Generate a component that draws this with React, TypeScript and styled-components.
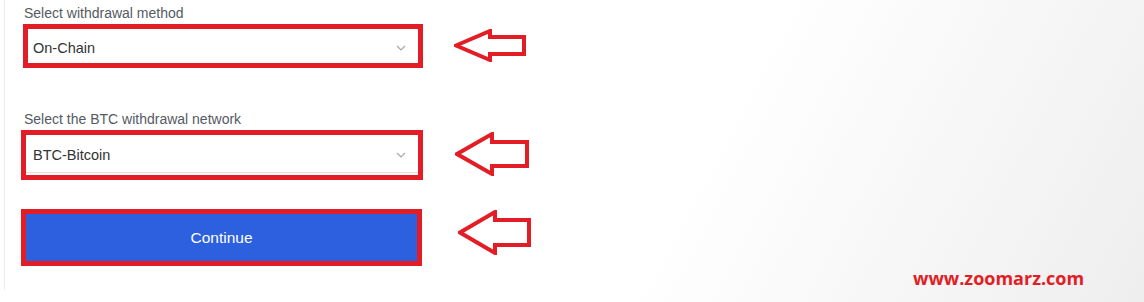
import styled, { createGlobalStyle } from "styled-components";

const GlobalStyle = createGlobalStyle`
  html, body {
    margin: 0;
    padding: 0;
  }
  body {
    font-family: "Liberation Sans", Arial, sans-serif;
  }
`;

const RED = "#e31d25";

const SPage = styled.div`
  position: relative;
  width: 1144px;
  height: 302px;
  overflow: hidden;
  background: linear-gradient(118deg, #ffffff 60%, #eeeeee 100%);
`;

const SPanel = styled.div`
  margin-left: 4px;
  width: 560px;
  height: 290px;
  box-sizing: border-box;
  border-left: 1px solid #ececec;
  padding: 5px 0 0 16px;
  display: flex;
  flex-direction: column;
`;

const SSection = styled.div<{ $gap: number }>`
  margin-top: ${({ $gap }) => $gap}px;
`;

const SLabel = styled.div`
  padding-left: 3px;
  font-size: 14px;
  line-height: 16px;
  color: #555a63;
  margin-bottom: 3px;
`;

const SRow = styled.div`
  display: flex;
  align-items: flex-start;
`;

const SFrame = styled.div<{ $offset: number; $width: number; $height: number }>`
  margin-left: ${({ $offset }) => $offset}px;
  width: ${({ $width }) => $width}px;
  height: ${({ $height }) => $height}px;
  box-sizing: border-box;
  border: 5px solid ${RED};
  display: flex;
  flex-direction: column;
`;

const SSelect = styled.div<{ $line: boolean; $pad: number }>`
  flex: 1;
  display: flex;
  align-items: center;
  justify-content: space-between;
  padding: 3px 12px 0 ${({ $pad }) => $pad}px;
  background: #fff;
  font-size: 14.5px;
  color: #333;
  border-bottom: ${({ $line }) => ($line ? "1px solid #eddcdc" : "none")};
  margin-bottom: ${({ $line }) => ($line ? 2 : 0)}px;
`;

const SButton = styled.button`
  flex: 1;
  border: none;
  margin: 0;
  background: #2d60df;
  color: #fff;
  font-family: "Liberation Sans", Arial, sans-serif;
  font-size: 15.5px;
  padding: 0;
  cursor: pointer;
`;

const SArrowBox = styled.div<{ $left: number; $top: number }>`
  margin-left: ${({ $left }) => $left}px;
  margin-top: ${({ $top }) => $top}px;
  line-height: 0;
`;

const SWatermark = styled.div`
  position: absolute;
  left: 913px;
  top: 266px;
  font-family: "Open Sans", "DejaVu Sans", sans-serif;
  font-weight: 700;
  font-size: 18px;
  color: ${RED};
`;

const Chevron = () => (
  <svg width="10" height="6" viewBox="0 0 10 6" fill="none">
    <path d="M1 1l4 4 4-4" stroke="#a5a8ad" strokeWidth="1.2" />
  </svg>
);

const Arrow = ({ w, h }: { w: number; h: number }) => {
  const s = 2;
  const hx = Math.round(w * 0.5);
  const t = Math.round(h * 0.23);
  const b = Math.round(h * 0.77);
  const pts = [
    [s, h / 2],
    [hx, s],
    [hx, t],
    [w - s, t],
    [w - s, b],
    [hx, b],
    [hx, h - s],
  ]
    .map((p) => p.join(","))
    .join(" ");
  return (
    <svg width={w} height={h} viewBox={`0 0 ${w} ${h}`}>
      <polygon points={pts} fill="none" stroke={RED} strokeWidth="4" strokeLinejoin="miter" />
    </svg>
  );
};

const App = () => {
  return (
    <>
      <GlobalStyle />
      <SPage>
        <SPanel>
          <SSection $gap={0}>
            <SLabel>Select withdrawal method</SLabel>
            <SRow>
              <SFrame $offset={2} $width={400} $height={44}>
                <SSelect $line={false} $pad={5}>
                  On-Chain
                  <Chevron />
                </SSelect>
              </SFrame>
              <SArrowBox $left={31} $top={5}>
                <Arrow w={72} h={33} />
              </SArrowBox>
            </SRow>
          </SSection>
          <SSection $gap={43}>
            <SLabel>Select the BTC withdrawal network</SLabel>
            <SRow>
              <SFrame $offset={0} $width={402} $height={50}>
                <SSelect $line $pad={7}>
                  BTC-Bitcoin
                  <Chevron />
                </SSelect>
              </SFrame>
              <SArrowBox $left={32} $top={2}>
                <Arrow w={74} h={44} />
              </SArrowBox>
            </SRow>
          </SSection>
          <SSection $gap={29}>
            <SRow>
              <SFrame $offset={0} $width={401} $height={57}>
                <SButton>Continue</SButton>
              </SFrame>
              <SArrowBox $left={36} $top={1}>
                <Arrow w={73} h={45} />
              </SArrowBox>
            </SRow>
          </SSection>
        </SPanel>
        <SWatermark>www.zoomarz.com</SWatermark>
      </SPage>
    </>
  );
};

export default App;
